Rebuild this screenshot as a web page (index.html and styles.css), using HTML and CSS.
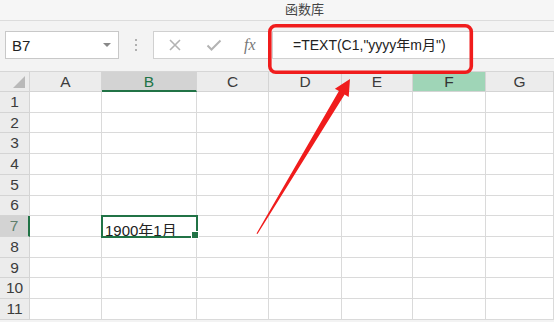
FILE: index.html
```html
<!DOCTYPE html>
<html lang="zh">
<head>
<meta charset="utf-8">
<link rel="stylesheet" href="styles.css">
</head>
<body>
<div class="app">
  <div class="title">函数库</div>
  <div class="fbar">
    <div class="namebox"><span>B7</span><span class="caret"></span></div>
    <div class="dots"><i></i><i></i><i></i></div>
    <div class="iconbox">
      <svg class="ico" width="14" height="14" viewBox="0 0 14 14"><path d="M2 2L12 12M12 2L2 12" stroke="#b3b3b3" stroke-width="1.6" fill="none"/></svg>
      <svg class="ico" width="16" height="14" viewBox="0 0 16 14"><path d="M1.5 7.5L5.5 11.5L14.5 2.5" stroke="#b3b3b3" stroke-width="2" fill="none"/></svg>
      <span class="fx">fx</span>
    </div>
    <div class="formula">=TEXT(C1,"yyyy年m月")</div>
  </div>
  <div class="grid">
    <div class="hd corner"><span class="tri"></span></div>
    <div class="hd col">A</div>
    <div class="hd col sel">B</div>
    <div class="hd col">C</div>
    <div class="hd col">D</div>
    <div class="hd col">E</div>
    <div class="hd col hi">F</div>
    <div class="hd col">G</div>

    <div class="hd row">1</div><div class="c"></div><div class="c"></div><div class="c"></div><div class="c"></div><div class="c"></div><div class="c"></div><div class="c"></div>
    <div class="hd row">2</div><div class="c"></div><div class="c"></div><div class="c"></div><div class="c"></div><div class="c"></div><div class="c"></div><div class="c"></div>
    <div class="hd row">3</div><div class="c"></div><div class="c"></div><div class="c"></div><div class="c"></div><div class="c"></div><div class="c"></div><div class="c"></div>
    <div class="hd row">4</div><div class="c"></div><div class="c"></div><div class="c"></div><div class="c"></div><div class="c"></div><div class="c"></div><div class="c"></div>
    <div class="hd row">5</div><div class="c"></div><div class="c"></div><div class="c"></div><div class="c"></div><div class="c"></div><div class="c"></div><div class="c"></div>
    <div class="hd row">6</div><div class="c"></div><div class="c"></div><div class="c"></div><div class="c"></div><div class="c"></div><div class="c"></div><div class="c"></div>
    <div class="hd row rsel">7</div><div class="c"></div><div class="c active">1900年1月</div><div class="c"></div><div class="c"></div><div class="c"></div><div class="c"></div><div class="c"></div>
    <div class="hd row">8</div><div class="c"></div><div class="c"></div><div class="c"></div><div class="c"></div><div class="c"></div><div class="c"></div><div class="c"></div>
    <div class="hd row">9</div><div class="c"></div><div class="c"></div><div class="c"></div><div class="c"></div><div class="c"></div><div class="c"></div><div class="c"></div>
    <div class="hd row">10</div><div class="c"></div><div class="c"></div><div class="c"></div><div class="c"></div><div class="c"></div><div class="c"></div><div class="c"></div>
    <div class="hd row">11</div><div class="c"></div><div class="c"></div><div class="c"></div><div class="c"></div><div class="c"></div><div class="c"></div><div class="c"></div>
  </div>
  <svg class="annot" width="554" height="322" viewBox="0 0 554 322">
    <rect x="269.8" y="25.8" width="201.5" height="46.5" rx="6" ry="6" fill="none" stroke="#f01c1c" stroke-width="3.6"/>
    <polygon points="350,79 348.7,96.9 344.6,94.4 257.5,234 256.5,233.6 338.9,91 334.9,88.7" fill="#f01c1c"/>
  </svg>
</div>
</body>
</html>
```

FILE: styles.css
```css
* { box-sizing: border-box; }
html, body { margin: 0; padding: 0; }
body {
  width: 554px;
  height: 322px;
  overflow: hidden;
  background: #f3f3f3;
  font-family: "Liberation Sans", "Noto Sans CJK SC", sans-serif;
  color: #333;
}
.app { position: relative; width: 554px; height: 322px; }
.title {
  height: 21px;
  padding-left: 285px;
  font-size: 13px;
  line-height: 20px;
  color: #444;
  background: #f6f6f6;
  border-bottom: 1px solid #dcdcdc;
}
.fbar {
  height: 51px;
  padding: 10px 0 0 5px;
  display: flex;
  align-items: flex-start;
  background: #f3f3f3;
  border-bottom: 1px solid #d6d6d6;
}
.namebox {
  width: 114px;
  height: 28px;
  background: #fff;
  border: 1px solid #c8c8c8;
  display: flex;
  align-items: center;
  justify-content: space-between;
  padding: 0 7px 0 6px;
  font-size: 15px;
  color: #222;
}
.caret {
  width: 0; height: 0;
  border-left: 4px solid transparent;
  border-right: 4px solid transparent;
  border-top: 4px solid #888;
}
.dots {
  width: 34px;
  height: 28px;
  display: flex;
  flex-direction: column;
  align-items: center;
  justify-content: center;
  gap: 3px;
}
.dots i { width: 2px; height: 2px; background: #b0b0b0; display: block; }
.iconbox {
  width: 116px;
  height: 28px;
  background: #fff;
  border: 1px solid #d0d0d0;
  display: flex;
  align-items: center;
  padding-left: 14px;
  gap: 24px;
}
.fx {
  font-family: "Liberation Serif", serif;
  font-style: italic;
  font-size: 16px;
  color: #777;
  margin-left: -2px;
}
.formula {
  margin-left: 3px;
  flex: 1;
  height: 28px;
  background: #fff;
  border: 1px solid #d0d0d0;
  border-right: none;
  font-size: 14px;
  line-height: 26px;
  padding-left: 20px;
  color: #222;
  white-space: nowrap;
}
.grid {
  display: grid;
  grid-template-columns: 30px 72px 95px 72px 73px 71px 73px 68px;
  grid-template-rows: 20px repeat(11, 20.73px);
  background: #fff;
}
.hd {
  background: #ececec;
  border-right: 1px solid #d4d4d4;
  border-bottom: 1px solid #d4d4d4;
  font-size: 15.5px;
  color: #3c3c3c;
  display: flex;
  align-items: center;
  justify-content: center;
}
.col { padding-top: 1px; }
.corner { position: relative; }
.tri {
  position: absolute;
  right: 4px;
  bottom: 3px;
  width: 0; height: 0;
  border-left: 12px solid transparent;
  border-bottom: 12px solid #b9b9b9;
}
.sel {
  background: #d3d3d3;
  color: #217346;
  border-bottom: 2px solid #217346;
}
.hi { background: #9fd5b7; color: #333; }
.rsel {
  background: #d3d3d3;
  color: #5f7f6c;
  border-right: 2px solid #217346;
}
.c {
  border-right: 1px solid #dadada;
  border-bottom: 1px solid #dadada;
}
.active {
  position: relative;
  z-index: 2;
  outline: 2px solid #217346;
  outline-offset: -1px;
  font-size: 15px;
  color: #222;
  padding: 3px 0 0 3px;
  white-space: nowrap;
}
.active::after {
  content: "";
  position: absolute;
  right: -3px;
  bottom: -3px;
  width: 6px;
  height: 6px;
  background: #217346;
  border: 1px solid #fff;
}
.annot {
  position: absolute;
  left: 0;
  top: 0;
  pointer-events: none;
  z-index: 5;
}
```
